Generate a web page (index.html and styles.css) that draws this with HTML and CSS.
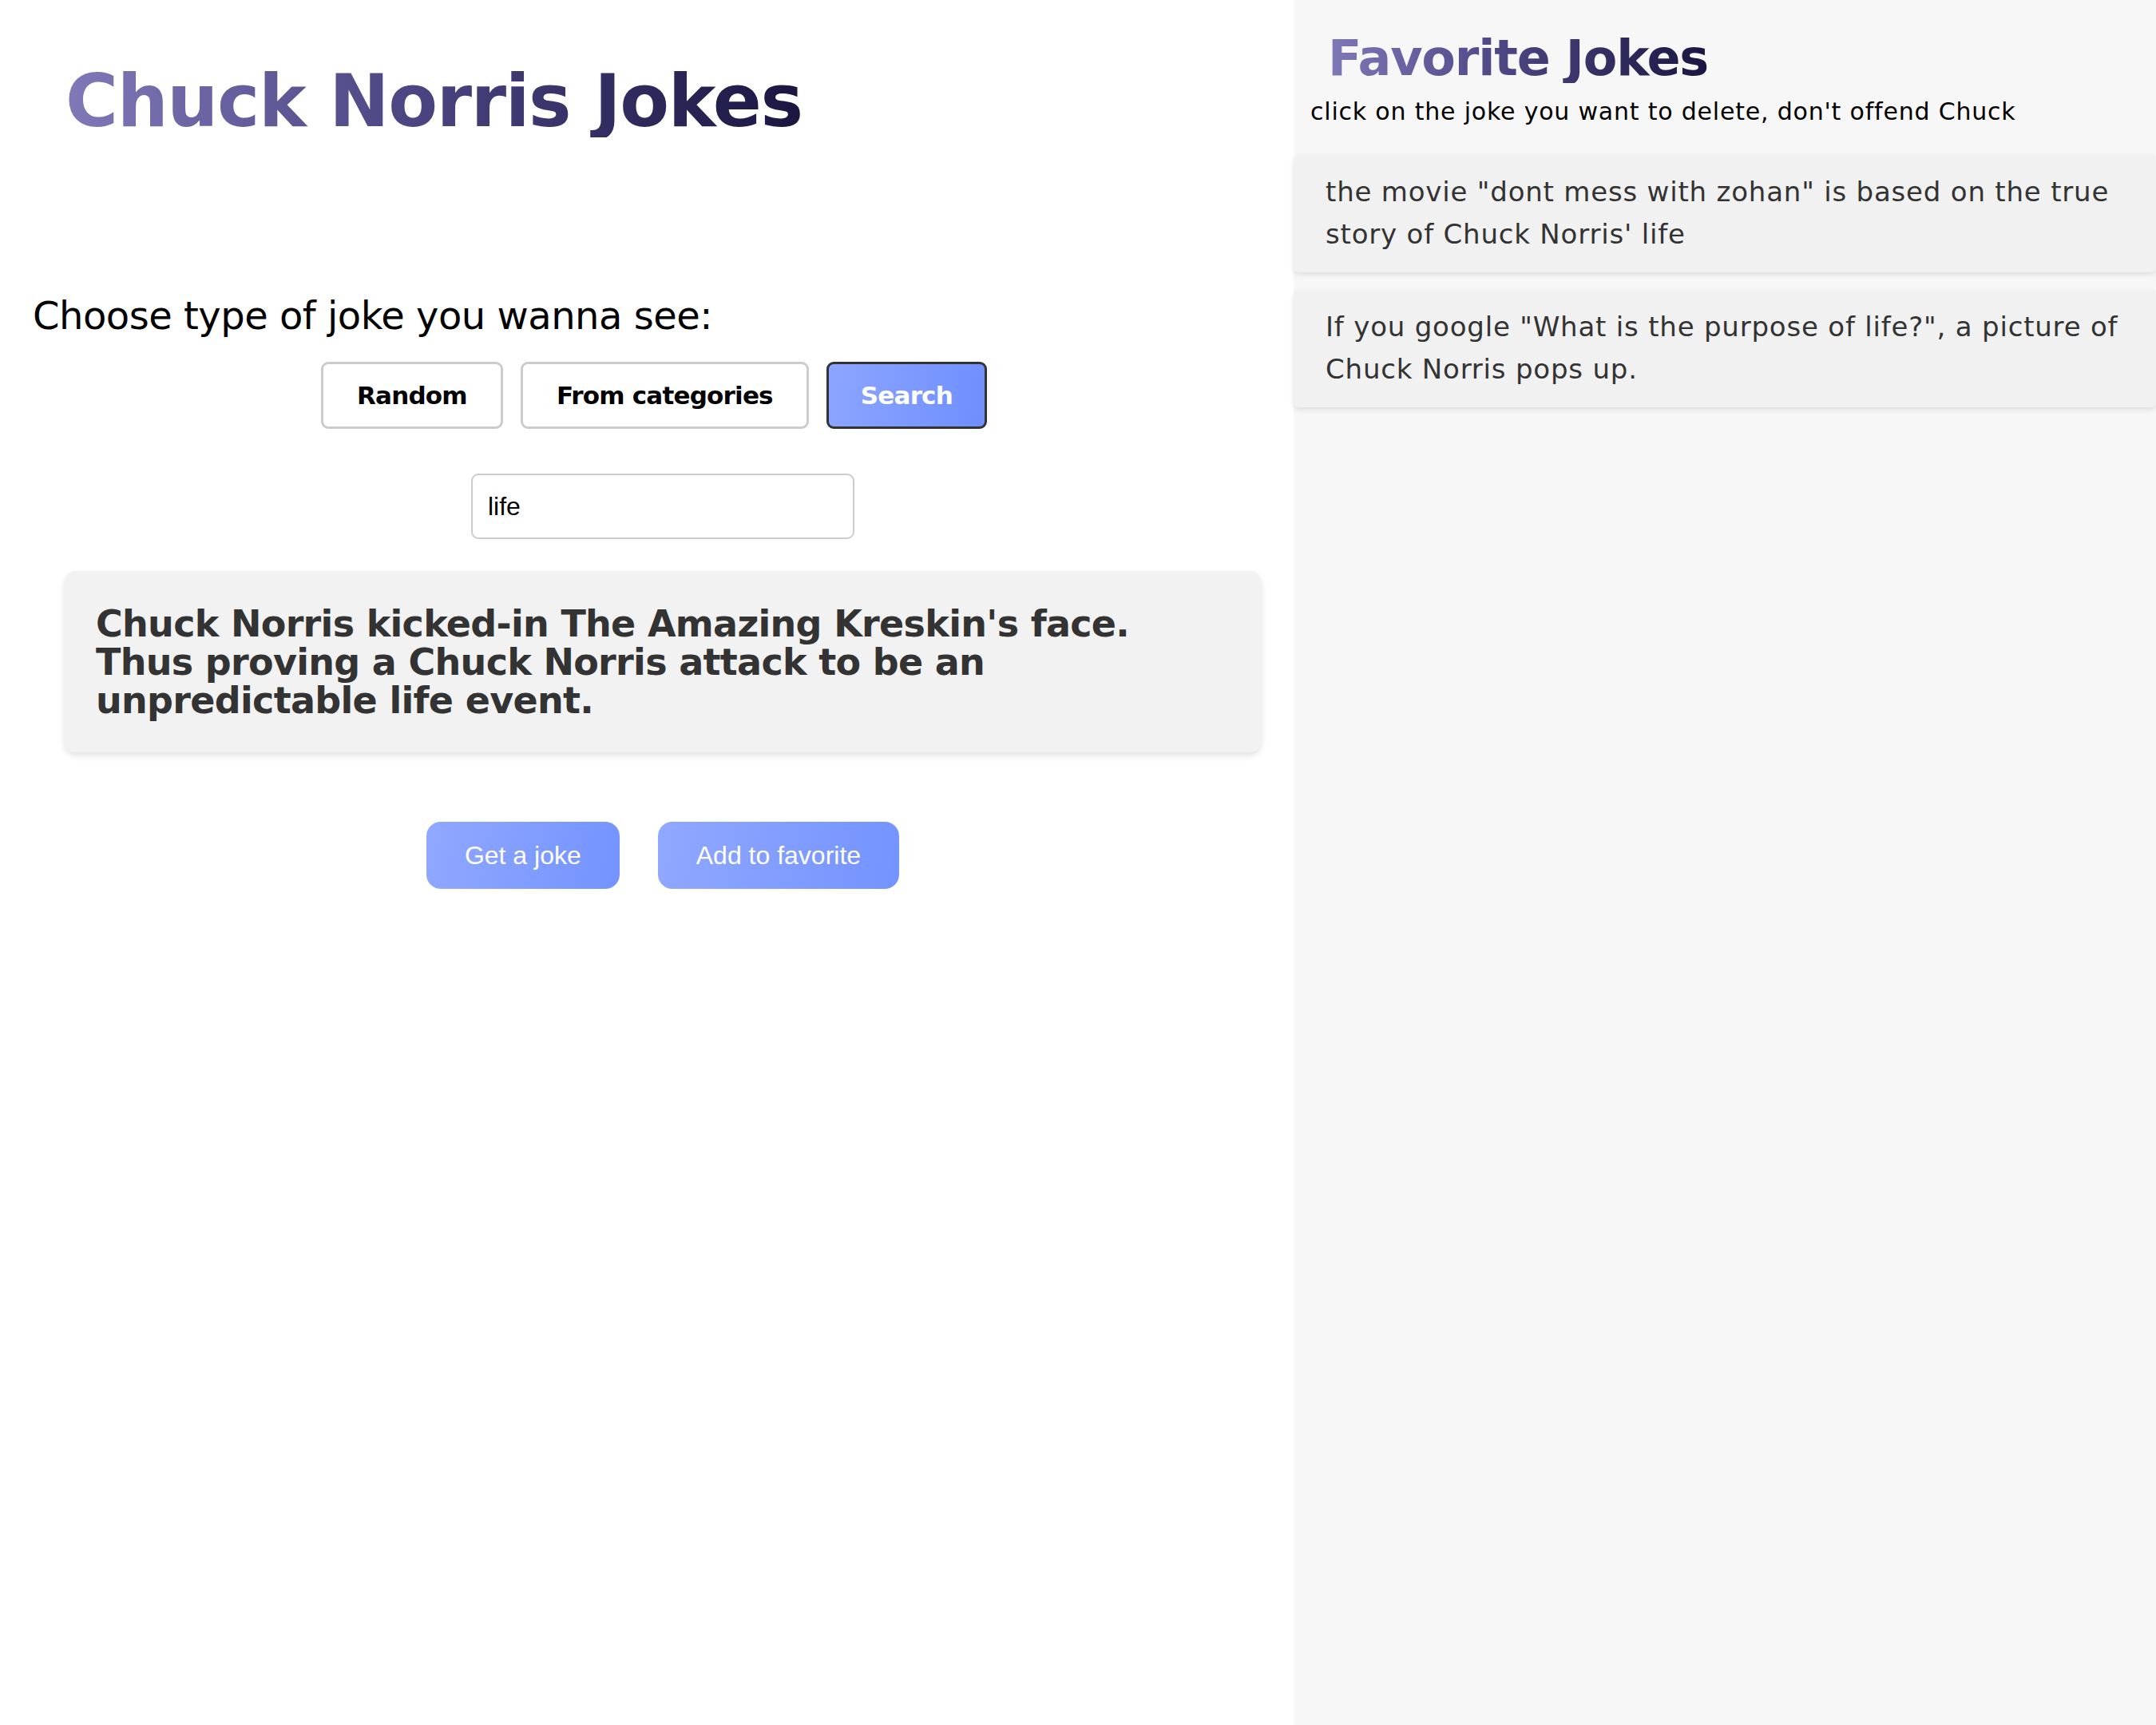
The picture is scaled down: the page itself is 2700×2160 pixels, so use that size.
FILE: index.html
```html
<!DOCTYPE html>
<html lang="en">
<head>
<meta charset="utf-8">
<title>Chuck Norris Jokes</title>
<link rel="stylesheet" href="styles.css">
</head>
<body>
<div class="app">
  <main class="main">
    <h1 class="title"><span class="grad">Chuck Norris Jokes</span></h1>
    <h2 class="prompt">Choose type of joke you wanna see:</h2>
    <div class="modes">
      <button class="mode">Random</button>
      <button class="mode">From categories</button>
      <button class="mode active">Search</button>
    </div>
    <div class="search-row">
      <input class="search" type="text" value="life">
    </div>
    <div class="joke-card">
      <p class="joke">Chuck Norris kicked-in The Amazing Kreskin's face. Thus proving a Chuck Norris attack to be an unpredictable life event.</p>
    </div>
    <div class="actions">
      <button class="action">Get a joke</button>
      <button class="action">Add to favorite</button>
    </div>
  </main>
  <aside class="side">
    <h2 class="fav-title"><span class="grad">Favorite Jokes</span></h2>
    <p class="fav-sub">click on the joke you want to delete, don't offend Chuck</p>
    <div class="fav-list">
      <div class="fav-card">the movie "dont mess with zohan" is based on the true story of Chuck Norris' life</div>
      <div class="fav-card">If you google "What is the purpose of life?", a picture of Chuck Norris pops up.</div>
    </div>
  </aside>
</div>
</body>
</html>
```

FILE: styles.css
```css
* { box-sizing: border-box; }
html, body { margin: 0; padding: 0; background: #ffffff; }
body { font-family: "DejaVu Sans", "Liberation Sans", sans-serif; color: #000; }

.app {
  display: flex;
  min-height: 2160px;
}

.main {
  width: 1620px;
  padding-left: 40px;
  display: flex;
  flex-direction: column;
}

.grad {
  display: inline-block;
  background: linear-gradient(90deg, #8079b8 0%, #4d4784 45%, #1a1640 100%);
  -webkit-background-clip: text;
  background-clip: text;
  color: transparent;
}

.title {
  margin: 82px 0 0 42px;
  font-size: 90px;
  line-height: 90px;
  font-weight: 700;
  letter-spacing: -1.4px;
}

.prompt {
  margin: 199px 0 0 1px;
  font-size: 48px;
  line-height: 48px;
  font-weight: 400;
  letter-spacing: -0.5px;
}

.modes {
  display: flex;
  justify-content: center;
  gap: 22px;
  padding-right: 22px;
  margin-top: 34px;
}

.mode {
  height: 84px;
  padding: 0 42px;
  background: #fff;
  border: 3px solid #cccccc;
  border-radius: 9px;
  font-family: "DejaVu Sans", sans-serif;
  font-weight: 700;
  font-size: 31px;
  letter-spacing: -0.8px;
  color: #000;
}

.mode.active {
  padding: 0 40px;
  background: linear-gradient(100deg, #8ca5ff, #6f8fff);
  border-color: #333333;
  color: #fff;
}

.search-row {
  display: flex;
  justify-content: center;
  margin-top: 56px;
}

.search {
  width: 480px;
  height: 82px;
  padding: 0 19px;
  border: 2px solid #cccccc;
  border-radius: 9px;
  font-family: "Liberation Sans", Arial, sans-serif;
  font-size: 32px;
  color: #000;
  outline: none;
}

.joke-card {
  margin: 40px 41px 0 41px;
  padding: 42px 60px 41px 39px;
  background: #f2f2f2;
  border-radius: 14px;
  box-shadow: 0 4px 8px rgba(0, 0, 0, 0.12);
}

.joke {
  margin: 0;
  font-size: 46px;
  line-height: 48px;
  font-weight: 700;
  letter-spacing: -0.7px;
  color: #333333;
}

.actions {
  display: flex;
  justify-content: center;
  gap: 48px;
  margin-top: 87px;
}

.action {
  height: 84px;
  padding: 0 48px;
  border: none;
  border-radius: 18px;
  background: linear-gradient(100deg, #91a8ff, #7393ff);
  font-family: "Liberation Sans", Arial, sans-serif;
  font-size: 32px;
  color: #fff;
}

.side {
  flex: 1;
  background: #f7f7f7;
  display: flex;
  flex-direction: column;
}

.fav-title {
  margin: 42px 0 0 43px;
  font-size: 62px;
  line-height: 62px;
  font-weight: 700;
  letter-spacing: -1.2px;
}

.fav-sub {
  margin: 18px 0 0 21px;
  font-size: 30px;
  line-height: 36px;
  letter-spacing: 0.8px;
  color: #000;
}

.fav-list {
  display: flex;
  flex-direction: column;
  gap: 22px;
  margin-top: 36px;
}

.fav-card {
  padding: 20px 30px 21px 40px;
  background: #f1f1f1;
  border-radius: 6px;
  box-shadow: 0 3px 6px rgba(0, 0, 0, 0.1);
  font-size: 34px;
  line-height: 53px;
  letter-spacing: 0.8px;
  color: #333333;
}
```
